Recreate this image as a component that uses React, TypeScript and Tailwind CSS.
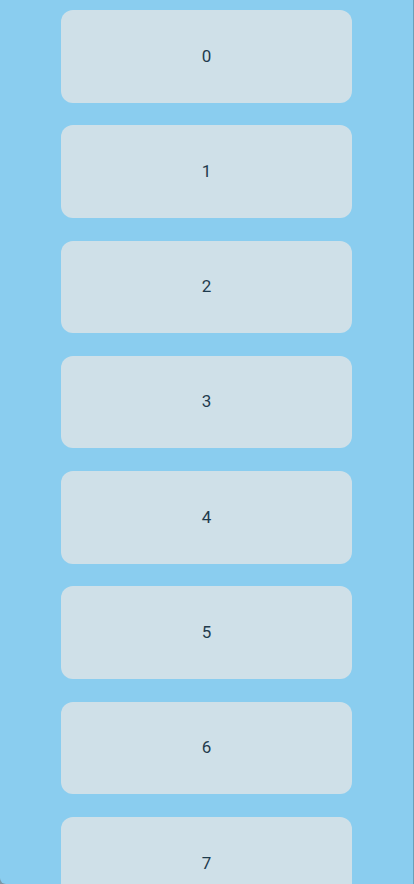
const items = Array.from({ length: 8 }, (_, i) => i);

export default function App() {
  return (
    <div className="h-[884px] w-[414px] bg-[#7a98a8]">
      <div className="flex h-full w-full flex-col items-center gap-[22.8px] overflow-hidden rounded-bl-[6px] border-r border-[#6a9fb8] bg-[#8acdef] pt-[10px] font-['Roboto',sans-serif]">
        {items.map((n) => (
          <div
            key={n}
            className="flex h-[92.5px] w-[291px] shrink-0 items-center justify-center rounded-[12px] bg-[#cfe0e8] text-[17px] text-[#1f3b4d]"
          >
            {n}
          </div>
        ))}
      </div>
    </div>
  );
}
